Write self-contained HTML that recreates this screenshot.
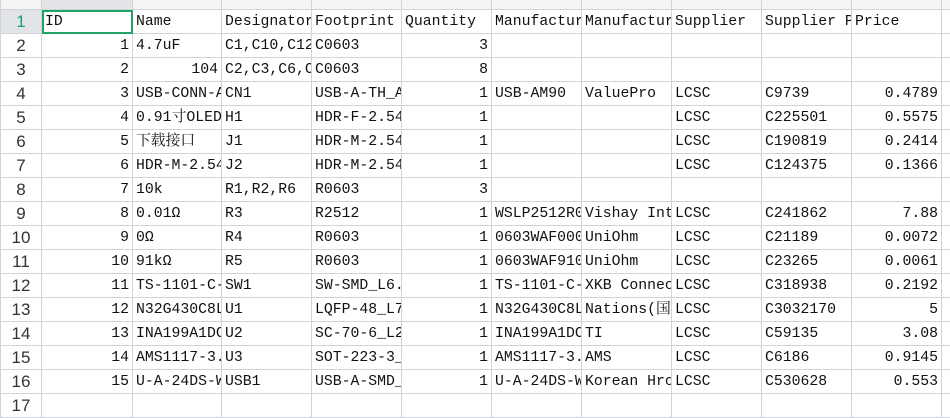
<!DOCTYPE html>
<html><head><meta charset="utf-8"><style>
html,body{margin:0;padding:0;background:#fff;width:950px;height:404px;overflow:hidden}
table{border-collapse:collapse;table-layout:fixed;width:962px;position:absolute;left:0;top:-1px;font-family:"Liberation Mono","Noto Serif CJK SC",monospace;font-size:14.8px;color:#111}
tr{height:24px}
td{border:1px solid #d0d3da;height:24px;padding:3px 0 0 3px;white-space:nowrap;overflow:hidden;line-height:19px;box-sizing:border-box;vertical-align:top}
tr.h{height:10px}
tr.h td{height:10px;padding:0;line-height:8px;background:#f5f5f5;border-color:#d0d3da}
td.n{font-family:"Liberation Sans",sans-serif;font-size:17px;color:#333;text-align:center;padding:2px 0 0 0;background:#fff}
td.r{text-align:right;padding:3px 3px 0 0}
tr.one td.n{background:#e2e4e8;color:#1f9f6a}
td.sel{outline:2px solid #21a366;outline-offset:-2px}
</style></head><body>
<table>
<colgroup><col style="width:41px"><col style="width:91px"><col style="width:89px"><col style="width:90px"><col style="width:90px"><col style="width:90px"><col style="width:90px"><col style="width:90px"><col style="width:90px"><col style="width:90px"><col style="width:90px"><col style="width:21px"></colgroup>
<tr class="h"><td class="n" style="background:#f5f5f5"></td><td style="background:#e2e4e8"></td><td></td><td></td><td></td><td></td><td></td><td></td><td></td><td></td><td></td><td></td></tr>
<tr class="one"><td class="n">1</td><td class="sel">ID</td><td>Name</td><td>Designator</td><td>Footprint</td><td>Quantity</td><td>Manufacturer</td><td>Manufacturer</td><td>Supplier</td><td>Supplier Part</td><td>Price</td><td></td></tr>
<tr><td class="n">2</td><td class="r">1</td><td>4.7uF</td><td>C1,C10,C12</td><td>C0603</td><td class="r">3</td><td></td><td></td><td></td><td></td><td></td><td></td></tr>
<tr><td class="n">3</td><td class="r">2</td><td class="r">104</td><td>C2,C3,C6,C</td><td>C0603</td><td class="r">8</td><td></td><td></td><td></td><td></td><td></td><td></td></tr>
<tr><td class="n">4</td><td class="r">3</td><td>USB-CONN-A</td><td>CN1</td><td>USB-A-TH_A</td><td class="r">1</td><td>USB-AM90</td><td>ValuePro</td><td>LCSC</td><td>C9739</td><td class="r">0.4789</td><td></td></tr>
<tr><td class="n">5</td><td class="r">4</td><td>0.91寸OLED</td><td>H1</td><td>HDR-F-2.54</td><td class="r">1</td><td></td><td></td><td>LCSC</td><td>C225501</td><td class="r">0.5575</td><td></td></tr>
<tr><td class="n">6</td><td class="r">5</td><td>下载接口</td><td>J1</td><td>HDR-M-2.54</td><td class="r">1</td><td></td><td></td><td>LCSC</td><td>C190819</td><td class="r">0.2414</td><td></td></tr>
<tr><td class="n">7</td><td class="r">6</td><td>HDR-M-2.54</td><td>J2</td><td>HDR-M-2.54</td><td class="r">1</td><td></td><td></td><td>LCSC</td><td>C124375</td><td class="r">0.1366</td><td></td></tr>
<tr><td class="n">8</td><td class="r">7</td><td>10k</td><td>R1,R2,R6</td><td>R0603</td><td class="r">3</td><td></td><td></td><td></td><td></td><td></td><td></td></tr>
<tr><td class="n">9</td><td class="r">8</td><td>0.01Ω</td><td>R3</td><td>R2512</td><td class="r">1</td><td>WSLP2512R0</td><td>Vishay Int</td><td>LCSC</td><td>C241862</td><td class="r">7.88</td><td></td></tr>
<tr><td class="n">10</td><td class="r">9</td><td>0Ω</td><td>R4</td><td>R0603</td><td class="r">1</td><td>0603WAF000</td><td>UniOhm</td><td>LCSC</td><td>C21189</td><td class="r">0.0072</td><td></td></tr>
<tr><td class="n">11</td><td class="r">10</td><td>91kΩ</td><td>R5</td><td>R0603</td><td class="r">1</td><td>0603WAF910</td><td>UniOhm</td><td>LCSC</td><td>C23265</td><td class="r">0.0061</td><td></td></tr>
<tr><td class="n">12</td><td class="r">11</td><td>TS-1101-C-</td><td>SW1</td><td>SW-SMD_L6.</td><td class="r">1</td><td>TS-1101-C-</td><td>XKB Connec</td><td>LCSC</td><td>C318938</td><td class="r">0.2192</td><td></td></tr>
<tr><td class="n">13</td><td class="r">12</td><td>N32G430C8L</td><td>U1</td><td>LQFP-48_L7</td><td class="r">1</td><td>N32G430C8L</td><td>Nations(国</td><td>LCSC</td><td>C3032170</td><td class="r">5</td><td></td></tr>
<tr><td class="n">14</td><td class="r">13</td><td>INA199A1DC</td><td>U2</td><td>SC-70-6_L2</td><td class="r">1</td><td>INA199A1DC</td><td>TI</td><td>LCSC</td><td>C59135</td><td class="r">3.08</td><td></td></tr>
<tr><td class="n">15</td><td class="r">14</td><td>AMS1117-3.</td><td>U3</td><td>SOT-223-3_</td><td class="r">1</td><td>AMS1117-3.</td><td>AMS</td><td>LCSC</td><td>C6186</td><td class="r">0.9145</td><td></td></tr>
<tr><td class="n">16</td><td class="r">15</td><td>U-A-24DS-W</td><td>USB1</td><td>USB-A-SMD_</td><td class="r">1</td><td>U-A-24DS-W</td><td>Korean Hro</td><td>LCSC</td><td>C530628</td><td class="r">0.553</td><td></td></tr>
<tr><td class="n">17</td><td></td><td></td><td></td><td></td><td></td><td></td><td></td><td></td><td></td><td></td><td></td></tr>
</table>
</body></html>
